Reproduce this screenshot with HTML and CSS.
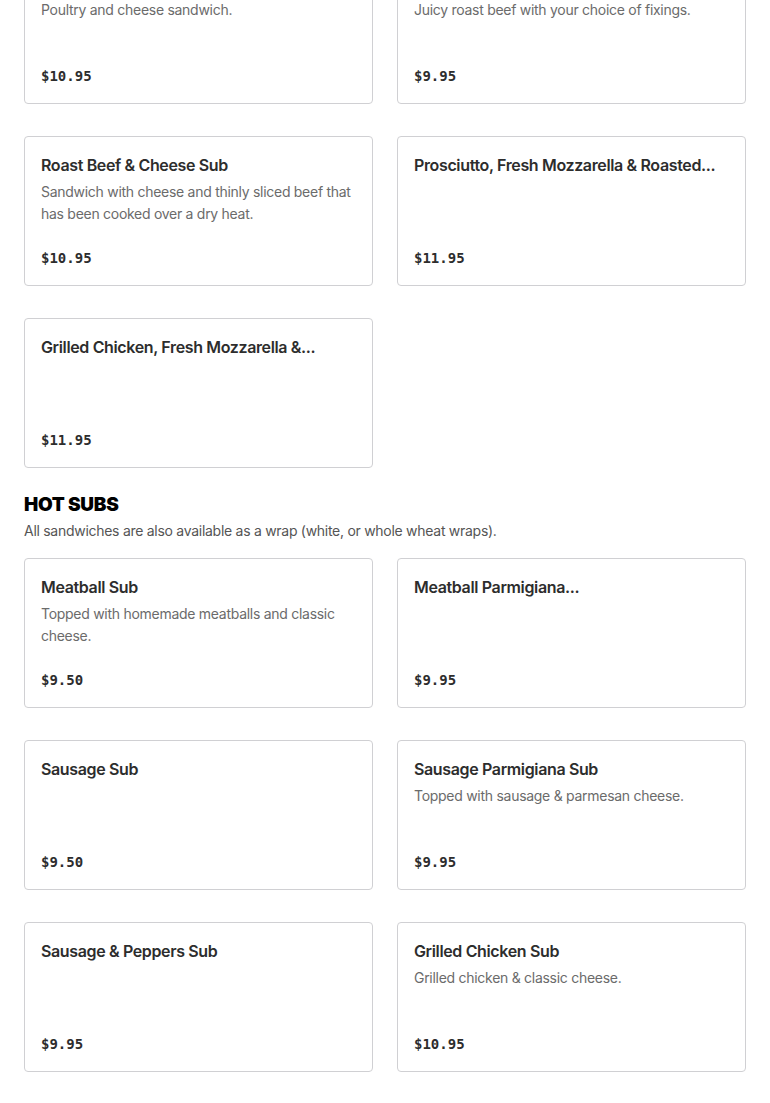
FILE: index.html
```html
<!DOCTYPE html>
<html lang="en">
<head>
<meta charset="utf-8">
<title>Menu</title>
<link rel="stylesheet" href="styles.css">
</head>
<body>
<main class="menu">
  <section class="section section-first">
    <div class="grid">
      <article class="card">
        <h3 class="card-title">Turkey &amp; Cheese Sub</h3>
        <p class="card-desc">Poultry and cheese sandwich.</p>
        <div class="card-price">$10.95</div>
      </article>
      <article class="card">
        <h3 class="card-title">Roast Beef Sub</h3>
        <p class="card-desc">Juicy roast beef with your choice of fixings.</p>
        <div class="card-price">$9.95</div>
      </article>
      <article class="card">
        <h3 class="card-title">Roast Beef &amp; Cheese Sub</h3>
        <p class="card-desc">Sandwich with cheese and thinly sliced beef that has been cooked over a dry heat.</p>
        <div class="card-price">$10.95</div>
      </article>
      <article class="card">
        <h3 class="card-title">Prosciutto, Fresh Mozzarella &amp; Roasted...</h3>
        <div class="card-price">$11.95</div>
      </article>
      <article class="card">
        <h3 class="card-title">Grilled Chicken, Fresh Mozzarella &amp;...</h3>
        <div class="card-price">$11.95</div>
      </article>
    </div>
  </section>

  <section class="section">
    <h2 class="section-title">HOT SUBS</h2>
    <p class="section-sub">All sandwiches are also available as a wrap (white, or whole wheat wraps).</p>
    <div class="grid">
      <article class="card">
        <h3 class="card-title">Meatball Sub</h3>
        <p class="card-desc">Topped with homemade meatballs and classic cheese.</p>
        <div class="card-price">$9.50</div>
      </article>
      <article class="card">
        <h3 class="card-title">Meatball Parmigiana...</h3>
        <div class="card-price">$9.95</div>
      </article>
      <article class="card">
        <h3 class="card-title">Sausage Sub</h3>
        <div class="card-price">$9.50</div>
      </article>
      <article class="card">
        <h3 class="card-title">Sausage Parmigiana Sub</h3>
        <p class="card-desc">Topped with sausage &amp; parmesan cheese.</p>
        <div class="card-price">$9.95</div>
      </article>
      <article class="card">
        <h3 class="card-title">Sausage &amp; Peppers Sub</h3>
        <div class="card-price">$9.95</div>
      </article>
      <article class="card">
        <h3 class="card-title">Grilled Chicken Sub</h3>
        <p class="card-desc">Grilled chicken &amp; classic cheese.</p>
        <div class="card-price">$10.95</div>
      </article>
    </div>
  </section>
</main>
</body>
</html>
```

FILE: styles.css
```css
* { box-sizing: border-box; }

html, body {
  margin: 0;
  padding: 0;
  background: #ffffff;
}

body {
  font-family: "Inter", "Noto Sans", "Liberation Sans", sans-serif;
  color: #2d2d2d;
}

.menu {
  padding: 0 24px;
  margin-top: -46px;
}

.grid {
  display: grid;
  grid-template-columns: 349px 349px;
  column-gap: 24px;
  row-gap: 32px;
}

.card {
  height: 150px;
  border: 1px solid #d0d0d3;
  border-radius: 4px;
  padding: 16px 16px 17px;
  display: flex;
  flex-direction: column;
  background: #fff;
}

.card-title {
  margin: 0;
  font-size: 16px;
  line-height: 24px;
  font-weight: 600;
  color: #2d2d2d;
  white-space: nowrap;
  overflow: hidden;
  text-overflow: ellipsis;
  letter-spacing: -0.36px;
}

.card-desc {
  margin: 4px 0 0;
  font-size: 14px;
  line-height: 22px;
  color: #6b6b6b;
  letter-spacing: -0.28px;
}

.card-price {
  margin-top: auto;
  font-family: "DejaVu Sans Mono", "Liberation Mono", monospace;
  font-weight: 700;
  font-size: 14px;
  line-height: 20px;
  color: #2d2d2d;
}

.section-title {
  margin: 25px 0 0;
  font-size: 19px;
  line-height: 24px;
  font-weight: 900;
  color: #000;
  letter-spacing: -0.3px;
}

.section-sub {
  margin: 4px 0 17px;
  font-size: 14px;
  line-height: 20px;
  color: #555;
  letter-spacing: -0.28px;
}
```
